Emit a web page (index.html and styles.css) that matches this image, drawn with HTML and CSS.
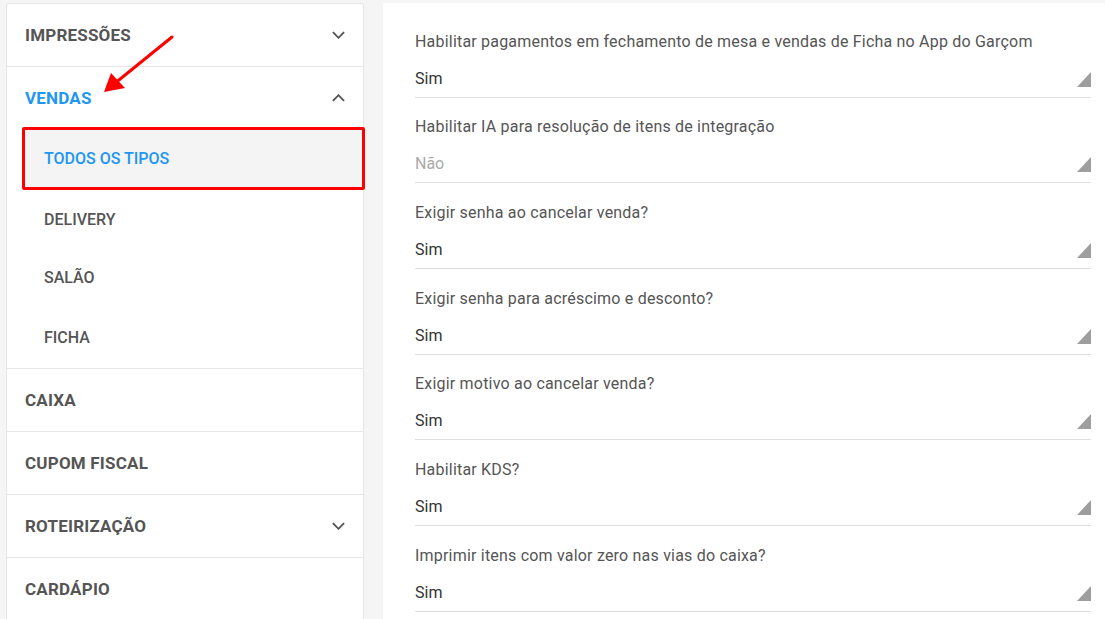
FILE: index.html
```html
<!DOCTYPE html>
<html lang="pt-BR">
<head>
    <meta charset="UTF-8">
    <meta name="viewport" content="width=device-width, initial-scale=1.0">
    <title>Configurações - Vendas</title>
    <link rel="stylesheet" href="styles.css">
</head>
<body>
    <div class="page">
        <nav class="menu">
            <div class="menu-item">
                <span>IMPRESSÕES</span>
                <svg class="chevron" viewBox="0 0 14 8"><path d="M1 1l6 6 6-6"/></svg>
            </div>
            <div class="menu-group">
                <div class="menu-item active">
                    <span>VENDAS</span>
                    <svg class="chevron" viewBox="0 0 14 8"><path d="M1 7l6-6 6 6"/></svg>
                </div>
                <div class="sub-item selected">TODOS OS TIPOS</div>
                <div class="sub-item">DELIVERY</div>
                <div class="sub-item">SALÃO</div>
                <div class="sub-item">FICHA</div>
            </div>
            <div class="menu-item"><span>CAIXA</span></div>
            <div class="menu-item"><span>CUPOM FISCAL</span></div>
            <div class="menu-item">
                <span>ROTEIRIZAÇÃO</span>
                <svg class="chevron" viewBox="0 0 14 8"><path d="M1 1l6 6 6-6"/></svg>
            </div>
            <div class="menu-item"><span>CARDÁPIO</span></div>
        </nav>

        <main class="settings">
            <div class="field">
                <label>Habilitar pagamentos em fechamento de mesa e vendas de Ficha no App do Garçom</label>
                <div class="select">Sim</div>
            </div>
            <div class="field">
                <label>Habilitar IA para resolução de itens de integração</label>
                <div class="select disabled">Não</div>
            </div>
            <div class="field">
                <label>Exigir senha ao cancelar venda?</label>
                <div class="select">Sim</div>
            </div>
            <div class="field">
                <label>Exigir senha para acréscimo e desconto?</label>
                <div class="select">Sim</div>
            </div>
            <div class="field">
                <label>Exigir motivo ao cancelar venda?</label>
                <div class="select">Sim</div>
            </div>
            <div class="field">
                <label>Habilitar KDS?</label>
                <div class="select">Sim</div>
            </div>
            <div class="field">
                <label>Imprimir itens com valor zero nas vias do caixa?</label>
                <div class="select">Sim</div>
            </div>
        </main>
    </div>

    <!-- annotation arrow -->
    <svg class="arrow" viewBox="0 0 80 64">
        <path d="M72 5L14 52" stroke="#f00" stroke-width="3" stroke-linecap="round" fill="none"/>
        <polygon points="4,60 11,41 25,56" fill="#f00"/>
    </svg>
</body>
</html>
```

FILE: styles.css
```css
body {
    margin: 0;
    background-color: #f5f5f5;
    font-family: Roboto, "Liberation Sans", sans-serif;
    overflow: hidden;
}
.page {
    display: flex;
    align-items: flex-start;
    gap: 19px;
    padding: 3px 0 0 6px;
}
.menu {
    width: 356px;
    flex-shrink: 0;
    background-color: #fff;
    border: 1px solid #e6e6e6;
    border-radius: 3px;
}
.menu-item {
    display: flex;
    align-items: center;
    justify-content: space-between;
    height: 62px;
    padding: 0 18px;
    font-size: 17px;
    font-weight: 700;
    letter-spacing: 0.2px;
    color: #555;
    border-bottom: 1px solid #e6e6e6;
}
.menu > .menu-item:last-child {
    border-bottom: none;
}
.menu-group {
    border-bottom: 1px solid #e6e6e6;
}
.menu-group .menu-item {
    border-bottom: none;
    height: 61px;
}
.menu-item.active {
    color: #2196f3;
}
.chevron {
    width: 13px;
    height: 8px;
    fill: none;
    stroke: #555;
    stroke-width: 2;
}
.sub-item {
    display: flex;
    align-items: center;
    height: 59px;
    padding-left: 37px;
    font-size: 16px;
    font-weight: 500;
    color: #555;
}
.sub-item.selected + .sub-item {
    height: 58px;
}
.sub-item:last-child {
    height: 61px;
}
.sub-item.selected {
    height: 57px;
    margin: -1px -2px 0 15px;
    padding-left: 19px;
    border: 3px solid #f00;
    border-radius: 2px;
    background-color: #f4f4f4;
    color: #2196f3;
}
.settings {
    flex: 1;
    background-color: #fff;
    padding: 9px 14px 0 32px;
    min-height: 640px;
}
.field {
    padding-top: 19.7px;
    border-bottom: 1px solid #e0e0e0;
}
.field label {
    display: block;
    line-height: 20px;
    font-size: 16px;
    color: #555;
    letter-spacing: 0.2px;
}
.select {
    position: relative;
    margin-top: 17px;
    padding-bottom: 8px;
    line-height: 20px;
    font-size: 16px;
    color: #333;
}
.select.disabled {
    color: #aaa;
}
.select::after {
    content: "";
    position: absolute;
    right: 0;
    bottom: 10px;
    width: 0;
    height: 0;
    border-left: 14px solid transparent;
    border-bottom: 15px solid #9e9e9e;
}
.arrow {
    position: absolute;
    left: 100px;
    top: 32px;
    width: 80px;
    height: 64px;
}
```
